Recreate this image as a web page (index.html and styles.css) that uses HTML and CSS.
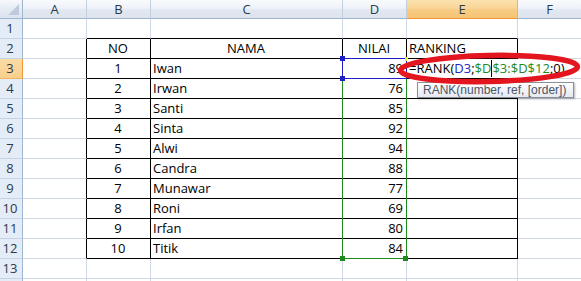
FILE: index.html
```html
<!DOCTYPE html>
<html>
<head>
<meta charset="utf-8">
<link rel="stylesheet" href="styles.css">
</head>
<body>
<div class="sheet">
  <div class="corner"><svg width="22" height="18" viewBox="0 0 22 18"><polygon points="19,4 19,15 8,15" fill="#bccadb"/><polyline points="8,15 19,4" stroke="#d6dfea" stroke-width="1" fill="none"/></svg></div>
  <div class="ch">A</div><div class="ch">B</div><div class="ch">C</div><div class="ch">D</div><div class="ch sel">E</div><div class="ch">F</div>

  <div class="rh">1</div><div class="c"></div><div class="c tt"></div><div class="c tt"></div><div class="c tt"></div><div class="c tt"></div><div class="c"></div>

  <div class="rh">2</div><div class="c tl"></div><div class="c t ctr">NO</div><div class="c t ctr">NAMA</div><div class="c t ctr">NILAI</div><div class="c t lt">RANKING</div><div class="c"></div>

  <div class="rh sel">3</div><div class="c tl"></div><div class="c t ctr">1</div><div class="c t lt">Iwan</div><div class="c t rt">89</div><div class="c t"></div><div class="c"></div>

  <div class="rh">4</div><div class="c tl"></div><div class="c t ctr">2</div><div class="c t lt">Irwan</div><div class="c t rt">76</div><div class="c t"></div><div class="c"></div>

  <div class="rh">5</div><div class="c tl"></div><div class="c t ctr">3</div><div class="c t lt">Santi</div><div class="c t rt">85</div><div class="c t"></div><div class="c"></div>

  <div class="rh">6</div><div class="c tl"></div><div class="c t ctr">4</div><div class="c t lt">Sinta</div><div class="c t rt">92</div><div class="c t"></div><div class="c"></div>

  <div class="rh">7</div><div class="c tl"></div><div class="c t ctr">5</div><div class="c t lt">Alwi</div><div class="c t rt">94</div><div class="c t"></div><div class="c"></div>

  <div class="rh">8</div><div class="c tl"></div><div class="c t ctr">6</div><div class="c t lt">Candra</div><div class="c t rt">88</div><div class="c t"></div><div class="c"></div>

  <div class="rh">9</div><div class="c tl"></div><div class="c t ctr">7</div><div class="c t lt">Munawar</div><div class="c t rt">77</div><div class="c t"></div><div class="c"></div>

  <div class="rh">10</div><div class="c tl"></div><div class="c t ctr">8</div><div class="c t lt">Roni</div><div class="c t rt">69</div><div class="c t"></div><div class="c"></div>

  <div class="rh">11</div><div class="c tl"></div><div class="c t ctr">9</div><div class="c t lt">Irfan</div><div class="c t rt">80</div><div class="c t"></div><div class="c"></div>

  <div class="rh">12</div><div class="c tl"></div><div class="c t ctr">10</div><div class="c t lt">Titik</div><div class="c t rt">84</div><div class="c t"></div><div class="c"></div>

  <div class="rh">13</div><div class="c"></div><div class="c"></div><div class="c"></div><div class="c"></div><div class="c"></div><div class="c"></div>

  <div class="rh"></div><div class="c"></div><div class="c"></div><div class="c"></div><div class="c"></div><div class="c"></div><div class="c"></div>
</div>

<div class="range-green"></div>
<div class="handle green hg1"></div>
<div class="handle green hg2"></div>
<div class="range-blue"></div>
<div class="handle blue hb1"></div>
<div class="handle blue hb2"></div>
<div class="handle yellow hy"></div>

<div class="editor">=RANK(<span class="ref-blue">D3</span>;<span class="ref-green">$D</span><span class="caret"></span><span class="ref-green">$3:$D$12</span>;0)</div>

<div class="tip">RANK(number, ref, [order])</div>

<svg class="mark" width="581" height="281" viewBox="0 0 581 281">
  <ellipse cx="489" cy="68.5" rx="88.5" ry="13" fill="none" stroke="#e3161f" stroke-width="5.5" transform="rotate(-1.2 489 68.5)"/>
</svg>
</body>
</html>
```

FILE: styles.css
```css
html, body {
  margin: 0;
  padding: 0;
  background: #ffffff;
  overflow: hidden;
}

body {
  width: 581px;
  height: 281px;
  position: relative;
  font-family: "Open Sans", "Liberation Sans", sans-serif;
  font-size: 13px;
  color: #000;
}

.sheet {
  display: grid;
  grid-template-columns: 23px 64px 64px 192px 64px 111px 64px;
  grid-template-rows: 19px repeat(13, 20px) 3px;
  width: 582px;
}

.sheet > div {
  box-sizing: border-box;
  white-space: nowrap;
  overflow: hidden;
}

.corner {
  background: linear-gradient(#f6f8fb, #e6ecf4 50%, #dbe3ee);
  border-right: 1px solid #9eb6ce;
  border-bottom: 1px solid #9eb6ce;
}

.corner svg {
  display: block;
}

.ch {
  background: linear-gradient(#f9fbfd 0%, #eef2f8 45%, #e2e8f1 55%, #dde4ee 100%);
  border-right: 1px solid #c3cfdf;
  border-bottom: 1px solid #9eb6ce;
  color: #2b3a4c;
  text-align: center;
  line-height: 18px;
}

.ch.sel {
  background: linear-gradient(#fbe2ae 0%, #f9d597 45%, #f7cb82 55%, #f5c574 100%);
  border-right: 1px solid #f1b35e;
  border-bottom: 1px solid #f29536;
}

.rh {
  background: #e4ecf7;
  border-right: 1px solid #9eb6ce;
  border-bottom: 1px solid #c5d3e3;
  color: #2b3a4c;
  text-align: center;
  line-height: 19px;
  padding-right: 2px;
}

.rh.sel {
  background: linear-gradient(#fbdca6, #f8d08c);
  border-right: 1px solid #f29536;
  border-bottom: 1px solid #f0b45c;
}

.c {
  border-right: 1px solid #d0d7e5;
  border-bottom: 1px solid #d0d7e5;
  line-height: 19px;
  padding: 0 3px 0 2px;
}

.c.tt {
  border-bottom-color: #000;
}

.c.tl {
  border-right-color: #000;
}

.c.t {
  border-right-color: #000;
  border-bottom-color: #000;
}

.ctr { text-align: center; }
.lt { text-align: left; }
.rt { text-align: right; }

.range-green {
  position: absolute;
  left: 342px;
  top: 58px;
  width: 63px;
  height: 199px;
  border: 1px solid #1d8a1d;
}

.range-blue {
  position: absolute;
  left: 342px;
  top: 58px;
  width: 63px;
  height: 19px;
  border: 1px solid #1f1fc8;
}

.handle {
  position: absolute;
  width: 5px;
  height: 5px;
}

.handle.green { background: #1d8a1d; }
.handle.blue { background: #1f1fc8; }
.handle.yellow { background: #f2e34a; width: 3px; height: 4px; }

.hg1 { left: 340px; top: 256px; }
.hg2 { left: 403px; top: 256px; }
.hb1 { left: 340px; top: 56px; }
.hb2 { left: 340px; top: 76px; }
.hy { left: 405px; top: 57px; }

.editor {
  position: absolute;
  left: 407px;
  top: 59px;
  width: 160px;
  height: 19px;
  background: #ffffff;
  line-height: 19px;
  padding-left: 2px;
  white-space: nowrap;
}

.ref-blue { color: #2424c4; }
.ref-green { color: #1d8a1d; }

.caret {
  display: inline-block;
  width: 1px;
  height: 17px;
  background: #000;
  vertical-align: -4px;
}

.tip {
  position: absolute;
  left: 417px;
  top: 82px;
  width: 157px;
  height: 16px;
  box-sizing: border-box;
  border: 1px solid #8b8f99;
  background: linear-gradient(#ffffff, #e6e8f0);
  box-shadow: 1px 1px 2px rgba(0, 0, 0, 0.3);
  font-family: "Liberation Sans", sans-serif;
  font-size: 12px;
  line-height: 14px;
  color: #4c5666;
  padding-left: 5px;
  white-space: nowrap;
}

.mark {
  position: absolute;
  left: 0;
  top: 0;
  pointer-events: none;
}
```
